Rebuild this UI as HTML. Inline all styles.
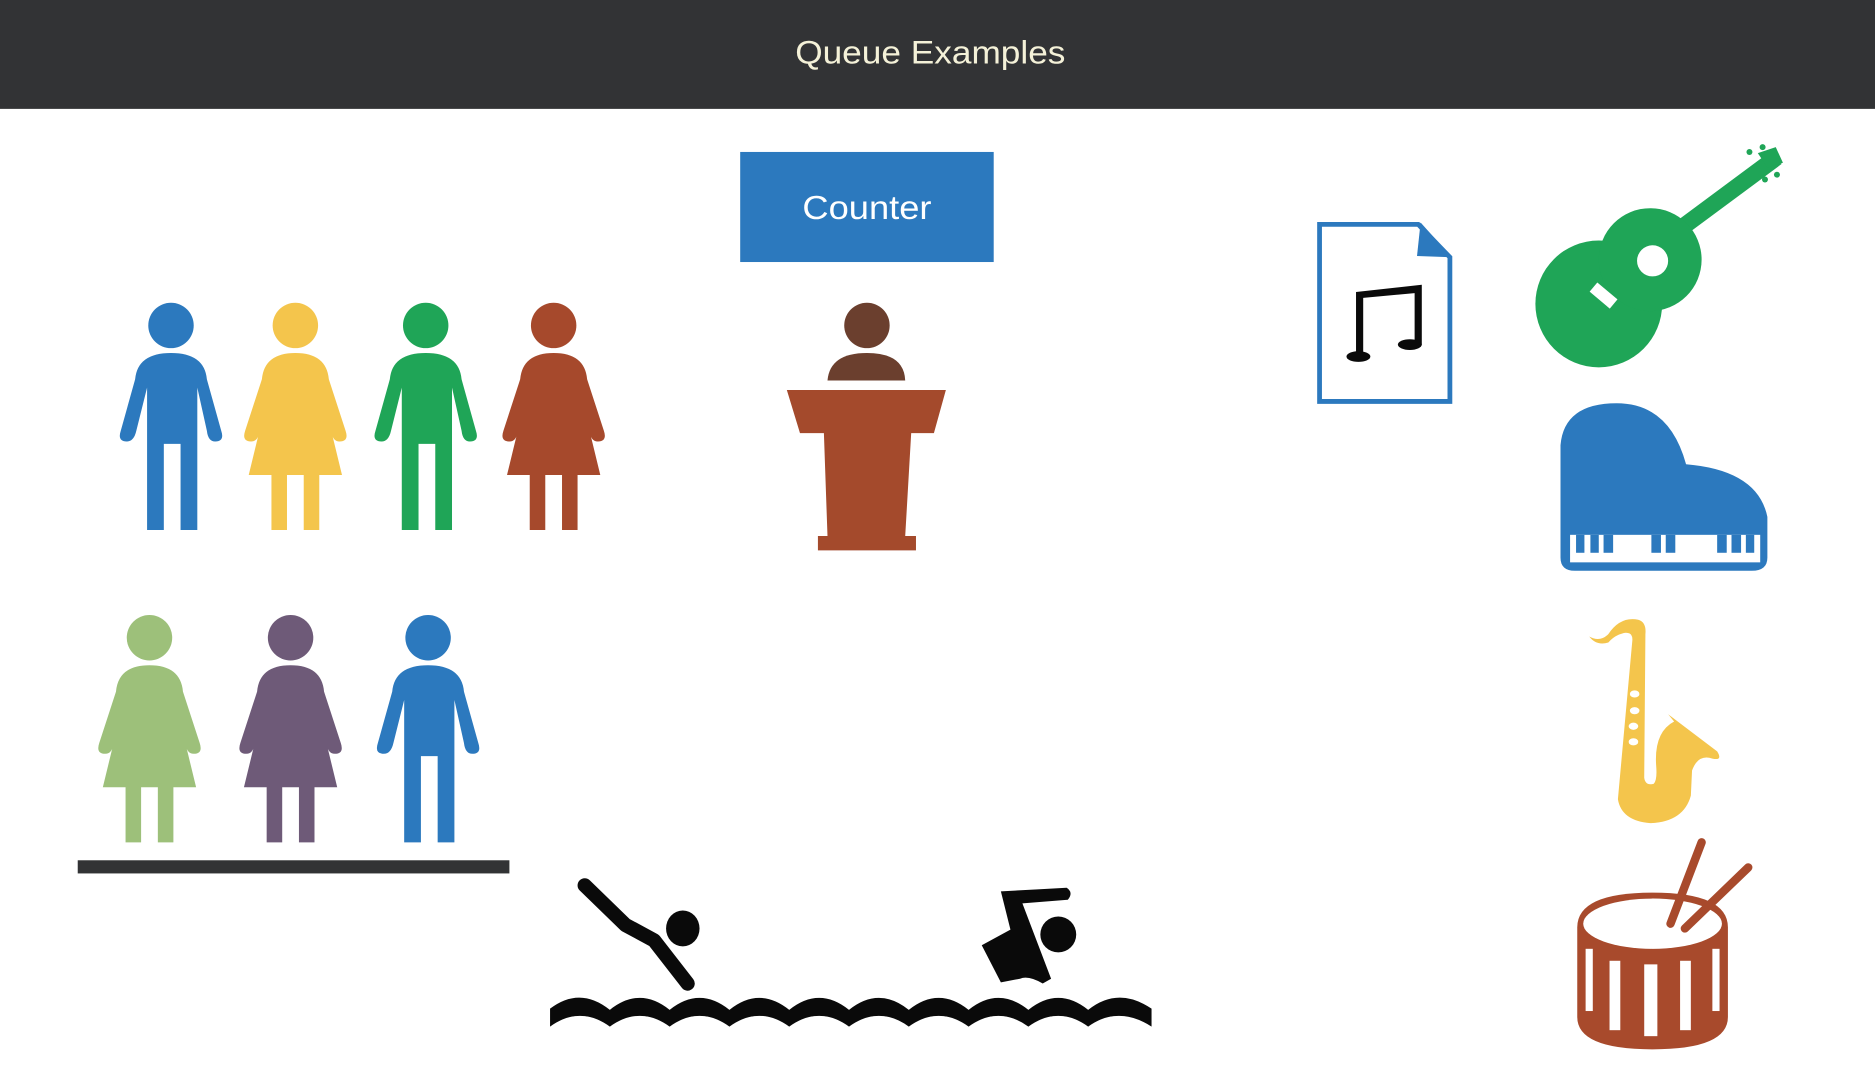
<!DOCTYPE html>
<html><head><meta charset="utf-8"><style>
html,body{margin:0;padding:0;background:#fff;overflow:hidden}
svg{display:block}
</style></head><body>
<svg width="1875" height="1090" viewBox="0 0 1568 911" preserveAspectRatio="none" xmlns="http://www.w3.org/2000/svg">
<defs>
<path id="man" d="M-30,45 Q-28,23 0,23 Q28,23 30,45 L42,88 Q45,97 37,97 Q31,97 30,88 L22,52 L22,171 L8,171 L8,99 L-6,99 L-6,171 L-20,171 L-20,52 L-29,88 Q-31,97 -37,97 Q-45,97 -42,88 Z"/>
<path id="woman" d="M-28,45 Q-26,23 0,23 Q26,23 28,45 L42,88 Q45,97 37,97 Q31,97 30,88 L22,55 L39,125 L20,125 L20,171 L7,171 L7,125 L-7,125 L-7,171 L-20,171 L-20,125 L-39,125 L-22,55 L-30,88 Q-31,97 -37,97 Q-45,97 -42,88 Z"/>
</defs>
<rect x="0" y="0" width="1568" height="91" fill="#323335"/>
<text x="778" y="53" text-anchor="middle" font-family="Liberation Sans, sans-serif" font-size="27" fill="#f4f1d8" textLength="226" lengthAdjust="spacingAndGlyphs">Queue Examples</text>
<rect x="619" y="127" width="212" height="92" fill="#2c79be"/>
<text x="725" y="183" text-anchor="middle" font-family="Liberation Sans, sans-serif" font-size="28" fill="#fff" textLength="108" lengthAdjust="spacingAndGlyphs">Counter</text>

<!-- row 1 -->
<g transform="translate(143,272)" fill="#2c79be"><circle r="19"/><use href="#man"/></g>
<g transform="translate(247,272)" fill="#f4c54c"><circle r="19"/><use href="#woman"/></g>
<g transform="translate(356,272)" fill="#1fa557"><circle r="19"/><use href="#man"/></g>
<g transform="translate(463,272)" fill="#a6492c"><circle r="19"/><use href="#woman"/></g>
<!-- row 2 -->
<g transform="translate(125,533)" fill="#9dc07a"><circle r="19"/><use href="#woman"/></g>
<g transform="translate(243,533)" fill="#6e5a78"><circle r="19"/><use href="#woman"/></g>
<g transform="translate(358,533)" fill="#2c79be"><circle r="19"/><use href="#man"/></g>
<rect x="65" y="719" width="361" height="11" fill="#323335"/>

<!-- podium -->
<circle cx="725" cy="272" r="19" fill="#6b3f2e"/>
<path d="M692,318 Q694,295 725,295 Q756,295 757,318 Z" fill="#6b3f2e"/>
<path d="M658,326 L791,326 L781,362 L762,362 L757,448 L766,448 L766,460 L684,460 L684,448 L692,448 L689,362 L669,362 Z" fill="#a44a2c"/>

<!-- swimmers -->
<g fill="#0a0a0a" stroke="#0a0a0a">
<polyline points="489,740 523,773 547,786 575,822" fill="none" stroke-width="12" stroke-linecap="round" stroke-linejoin="round"/>
<ellipse cx="571" cy="776" rx="14" ry="15" stroke="none"/>
<path d="M837,745 L892,742 Q898,746 893,752 L855,755 L879,818 L872,822 Q860,815 853,818 L837,821 L821,790 L845,777 Z" stroke="none"/>
<ellipse cx="885" cy="781" rx="15" ry="15" stroke="none"/>
<path d="M460,843 Q485,824 510,844 Q535,824 560,844 Q585,824 610,844 Q635,824 660,844 Q685,824 710,844 Q735,824 760,844 Q785,824 810,844 Q835,824 860,844 Q885,824 910,844 Q935,824 963,843 L963,858 Q935,840 910,858 Q885,840 860,858 Q835,840 810,858 Q785,840 760,858 Q735,840 710,858 Q685,840 660,858 Q635,840 610,858 Q585,840 560,858 Q535,840 510,858 Q485,840 460,858 Z" stroke="none"/>
</g>

<!-- music file -->
<path d="M1103.5,187.5 L1186,187.5 L1212.5,215 L1212.5,335.5 L1103.5,335.5 Z" fill="#fff" stroke="#2c79be" stroke-width="4"/>
<path d="M1188,186 L1214,215 L1185,214 Z" fill="#2c79be"/>
<g fill="#0a0a0a">
<path d="M1134,244 L1189,238 L1189,288 L1183,288 L1183,245 L1140,249 L1140,298 L1134,298 Z"/>
<ellipse cx="1136" cy="298" rx="10" ry="4.5"/>
<ellipse cx="1179" cy="288" rx="10" ry="4.5"/>
</g>

<!-- guitar -->
<g fill="#1fa557">
<path d="M1395,190 L1476,130 L1490,137 L1405,200 Z"/>
<path d="M1470,128 L1485,123 L1491,136 L1478,140 Z"/>
<circle cx="1463" cy="127" r="2.5"/><circle cx="1474" cy="123" r="2.5"/><circle cx="1476" cy="150" r="2.5"/><circle cx="1486" cy="146" r="2.5"/>
<circle cx="1337" cy="254" r="53"/>
<circle cx="1380" cy="217" r="43"/>
</g>
<circle cx="1382" cy="218" r="13" fill="#fff"/>
<rect x="1330" y="242" width="22" height="10" fill="#fff" transform="rotate(40 1341 247)"/>

<!-- piano -->
<path d="M1305,372 Q1308,337 1352,337 Q1396,337 1410,388 Q1470,393 1478,432 L1478,466 Q1478,477 1465,477 L1317,477 Q1305,477 1305,466 Z" fill="#2c79be"/>
<rect x="1313" y="447" width="159" height="23" fill="#fff"/>
<g fill="#2c79be">
<rect x="1318" y="447" width="7" height="15"/><rect x="1330" y="447" width="7" height="15"/><rect x="1341" y="447" width="8" height="15"/>
<rect x="1381" y="447" width="8" height="15"/><rect x="1393" y="447" width="8" height="15"/>
<rect x="1436" y="447" width="8" height="15"/><rect x="1448" y="447" width="8" height="15"/><rect x="1460" y="447" width="7" height="15"/>
</g>

<!-- sax -->
<path d="M1329,532 Q1338,537 1345,530 Q1355,515 1370,518 Q1377,520 1376,530 L1375,650 Q1376,657 1383,655 Q1386,652 1385,640 Q1383,612 1400,603 L1395,597 L1436,628 Q1441,636 1432,634 Q1420,630 1415,644 L1414,665 Q1408,687 1380,688 Q1356,686 1353,668 L1365,536 Q1366,528 1358,529 Q1350,531 1345,537 Q1335,540 1329,532 Z" fill="#f4c54c"/>
<g fill="#fff"><ellipse cx="1367" cy="580" rx="4" ry="3"/><ellipse cx="1367" cy="594" rx="4" ry="3"/><ellipse cx="1366" cy="607" rx="4" ry="3"/><ellipse cx="1366" cy="620" rx="4" ry="3"/></g>

<!-- drum -->
<g fill="#a84a2c">
<path d="M1319,775 Q1319,746 1382,746 Q1445,746 1445,775 L1445,850 Q1445,877 1382,877 Q1319,877 1319,850 Z"/>
</g>
<ellipse cx="1382" cy="772" rx="58" ry="21" fill="#fff"/>
<g fill="#fff">
<rect x="1326" y="793" width="6" height="52"/><rect x="1346" y="803" width="9" height="58"/><rect x="1375" y="806" width="11" height="60"/><rect x="1405" y="803" width="9" height="58"/><rect x="1432" y="793" width="6" height="52"/>
</g>
<g stroke="#a84a2c" stroke-width="7" stroke-linecap="round">
<line x1="1423" y1="704" x2="1397" y2="772"/><line x1="1462" y1="725" x2="1409" y2="776"/>
</g>
</svg>
</body></html>
